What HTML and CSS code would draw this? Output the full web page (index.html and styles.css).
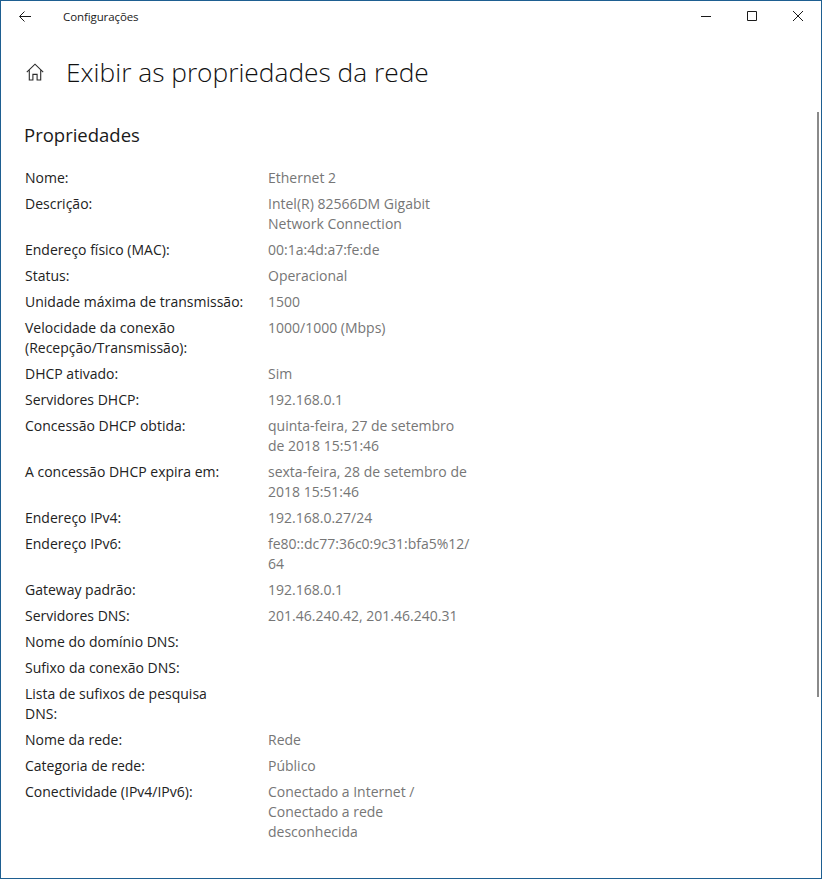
FILE: index.html
```html
<!DOCTYPE html>
<html lang="pt-BR">
<head>
    <meta charset="UTF-8">
    <meta name="viewport" content="width=device-width, initial-scale=1.0">
    <title>Configurações</title>
    <link rel="stylesheet" href="styles.css">
</head>
<body>
    <div class="window">
        <header class="titlebar">
            <div class="titlebar-left">
                <svg class="back-icon" width="12" height="11" viewBox="0 0 12 11" fill="none" stroke="#1a1a1a" stroke-width="1">
                    <path d="M12 5.5H.8M5.5.5l-5 5 5 5"/>
                </svg>
                <span class="app-name">Configurações</span>
            </div>
            <div class="window-controls">
                <svg width="10" height="10" viewBox="0 0 10 10" stroke="#1a1a1a" fill="none"><path d="M0 5.5h10"/></svg>
                <svg width="10" height="10" viewBox="0 0 10 10" stroke="#1a1a1a" fill="none"><path d="M.5.5h9v9h-9z"/></svg>
                <svg width="10" height="10" viewBox="0 0 10 10" stroke="#1a1a1a" fill="none"><path d="M0 0l10 10M10 0 0 10"/></svg>
            </div>
        </header>

        <div class="page-head">
            <svg class="home-icon" width="18" height="18" viewBox="0 0 18 18" fill="none" stroke="#2b2b2b" stroke-width="1.1">
                <path d="M.8 9.2 9 1.2l8.2 8M3.3 7.2V17h3.6v-5.6h4.2V17h3.6V7.2"/>
            </svg>
            <h1>Exibir as propriedades da rede</h1>
        </div>

        <main class="content">
            <h2>Propriedades</h2>
            <dl class="props">
                <dt>Nome:</dt><dd>Ethernet 2</dd>
                <dt>Descrição:</dt><dd>Intel(R) 82566DM Gigabit<br>Network Connection</dd>
                <dt>Endereço físico (MAC):</dt><dd>00:1a:4d:a7:fe:de</dd>
                <dt>Status:</dt><dd>Operacional</dd>
                <dt>Unidade máxima de transmissão:</dt><dd>1500</dd>
                <dt>Velocidade da conexão<br>(Recepção/Transmissão):</dt><dd>1000/1000 (Mbps)</dd>
                <dt>DHCP ativado:</dt><dd>Sim</dd>
                <dt>Servidores DHCP:</dt><dd>192.168.0.1</dd>
                <dt>Concessão DHCP obtida:</dt><dd>quinta-feira, 27 de setembro<br>de 2018 15:51:46</dd>
                <dt>A concessão DHCP expira em:</dt><dd>sexta-feira, 28 de setembro de<br>2018 15:51:46</dd>
                <dt>Endereço IPv4:</dt><dd>192.168.0.27/24</dd>
                <dt>Endereço IPv6:</dt><dd>fe80::dc77:36c0:9c31:bfa5%12/<br>64</dd>
                <dt>Gateway padrão:</dt><dd>192.168.0.1</dd>
                <dt>Servidores DNS:</dt><dd>201.46.240.42, 201.46.240.31</dd>
                <dt>Nome do domínio DNS:</dt><dd></dd>
                <dt>Sufixo da conexão DNS:</dt><dd></dd>
                <dt>Lista de sufixos de pesquisa<br>DNS:</dt><dd></dd>
                <dt>Nome da rede:</dt><dd>Rede</dd>
                <dt>Categoria de rede:</dt><dd>Público</dd>
                <dt>Conectividade (IPv4/IPv6):</dt><dd>Conectado a Internet /<br>Conectado a rede<br>desconhecida</dd>
            </dl>
        </main>

        <div class="scrollbar"></div>
    </div>
</body>
</html>
```

FILE: styles.css
```css
html, body {
    margin: 0;
    padding: 0;
}
body {
    font-family: "Open Sans", "Noto Sans", Arial, sans-serif;
    background-color: #fff;
    color: #1a1a1a;
}
.window {
    position: relative;
    box-sizing: border-box;
    height: 879px;
    border: 1px solid #1e5f91;
    overflow: hidden;
}
.titlebar {
    display: flex;
    justify-content: space-between;
    align-items: center;
    height: 30px;
}
.titlebar-left {
    display: flex;
    align-items: center;
    padding-left: 18px;
}
.back-icon {
    margin-right: 32px;
}
.app-name {
    font-size: 11.5px;
    letter-spacing: -0.1px;
}
.window-controls {
    display: flex;
    gap: 36px;
    padding-right: 18px;
}
.page-head {
    display: flex;
    align-items: center;
    height: 48px;
    margin-top: 17px;
    padding-left: 25px;
}
.home-icon {
    margin-right: 22px;
}
h1 {
    margin: 0 0 1px;
    font-size: 26.3px;
    font-weight: 300;
    color: #111;
}
.content {
    padding: 23px 0 0 23px;
}
h2 {
    margin: 0;
    height: 32px;
    font-size: 18.5px;
    line-height: 32px;
    font-weight: 400;
    color: #1a1a1a;
}
.props {
    display: grid;
    grid-template-columns: 243px 1fr;
    row-gap: 6px;
    margin: 17px 0 0 1px;
    font-size: 14px;
    line-height: 20px;
}
.props dt {
    color: #222;
}
.props dd {
    margin: 0;
    color: #767676;
}
.scrollbar {
    position: absolute;
    top: 111px;
    right: 2px;
    width: 2px;
    height: 585px;
    background-color: #8a8a8a;
}
```
